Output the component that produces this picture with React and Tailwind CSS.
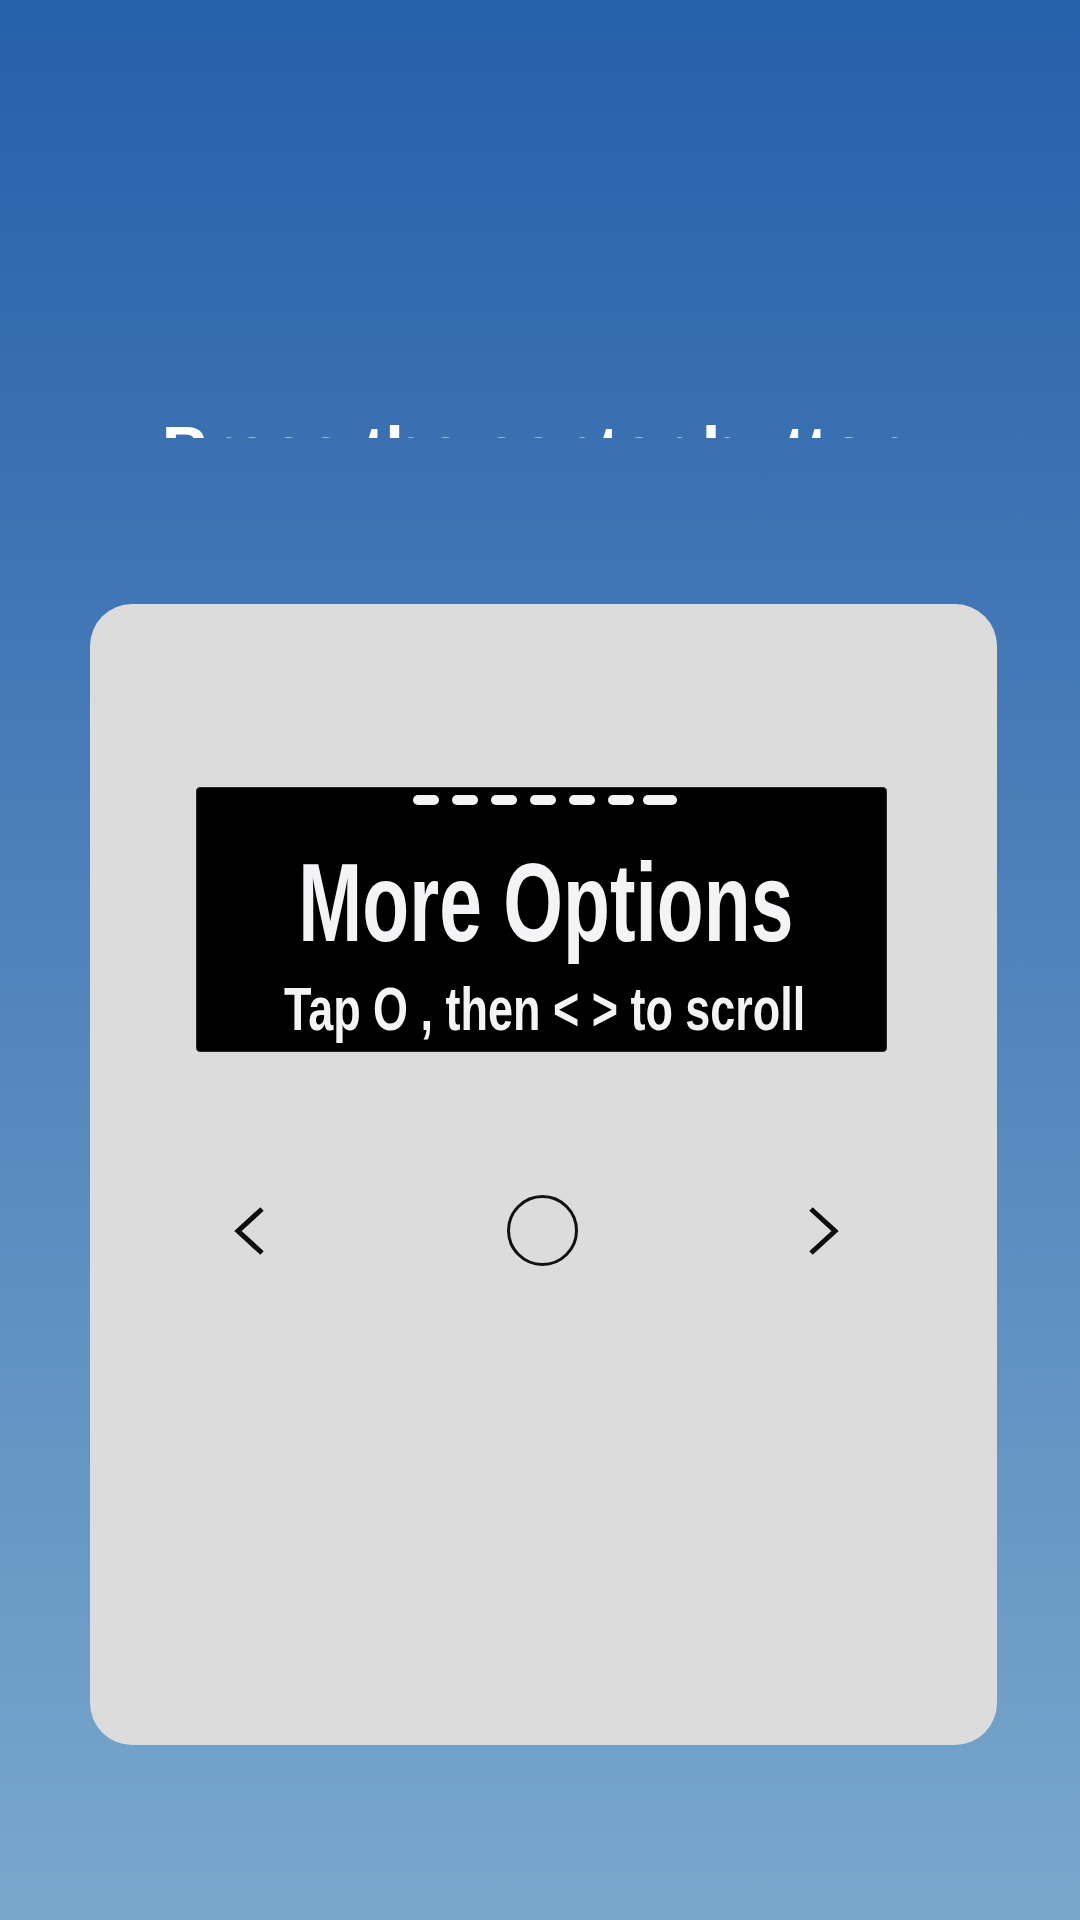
import React from 'react'

// Little arrow for the remote's side keys
function Chevron({ dir }) {
    const d = dir === 'left' ? 'M29 2 L5 24 L29 46' : 'M3 2 L27 24 L3 46'
    return (
        <svg width="32" height="48" viewBox="0 0 32 48" fill="none">
            <path d={d} stroke="#0d0d0d" strokeWidth="5" strokeLinejoin="miter" />
        </svg>
    )
}

export default function App() {
    const dashes = [0, 1, 2, 3, 4, 5]

    return (
        <div className="w-[1080px] h-[1920px] overflow-hidden bg-gradient-to-b from-[#2660aa] to-[#79a7cc] font-['Liberation_Sans',Arial,sans-serif]">
            <div className="h-[438px] overflow-hidden pt-[416px]">
                <div className="text-center text-white font-bold text-[67px] leading-none whitespace-nowrap pr-[8px]">
                    Press the center button
                </div>
            </div>

            {/* Remote body */}
            <div className="mt-[166px] ml-[90px] w-[907px] h-[1141px] rounded-[42px] bg-[#dcdcdc] pt-[183px]">
                <div className="ml-[106px] w-[691px] h-[265px] bg-black rounded-[4px] border border-[#2a2a2a] flex flex-col items-center">
                    <div className="flex items-center mt-[7px] ml-[6px]">
                        {dashes.map(i => (
                            <span key={i} className="w-[26px] h-[10px] rounded-full bg-[#f4f4f6] mr-[13px]"></span>
                        ))}
                        <span className="w-[34px] h-[10px] rounded-full bg-[#f4f4f6] -ml-[4px]"></span>
                    </div>
                    <div className="mt-[42px] text-[112px] leading-none font-bold text-[#f4f4f6] whitespace-nowrap scale-x-[0.686] ml-[8px]">
                        More Options
                    </div>
                    <div className="mt-[20px] text-[61px] leading-none font-bold text-[#f4f4f6] whitespace-nowrap scale-x-[0.737] ml-[6px]">
                        Tap O , then &lt; &gt; to scroll
                    </div>
                </div>

                <div className="mt-[143px] h-[71px] flex items-center">
                    <div className="ml-[143px]">
                        <Chevron dir="left" />
                    </div>
                    <div className="ml-[242px] w-[71px] h-[71px] rounded-full border-[3px] border-[#111]"></div>
                    <div className="ml-[230px]">
                        <Chevron dir="right" />
                    </div>
                </div>
            </div>
        </div>
    )
}
